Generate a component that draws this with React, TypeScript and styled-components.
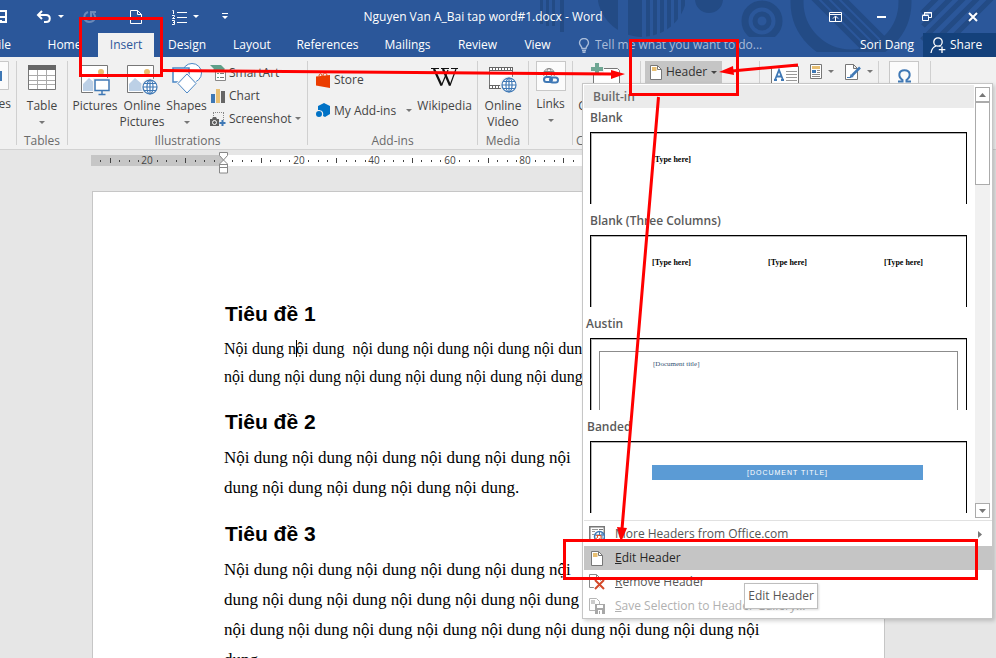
import React from "react";
import styled, { createGlobalStyle, css } from "styled-components";

const ui = `"Open Sans", "Noto Sans", sans-serif`;
const serif = `"Liberation Serif", "Times New Roman", serif`;

const GlobalStyle = createGlobalStyle`
  * { box-sizing: border-box; }
  body { margin: 0; overflow: hidden; }
  button { font: inherit; color: inherit; background: none; border: 0; padding: 0; cursor: default; }
  svg { display: block; flex: none; }
`;

const Window = styled.div`
  position: relative;
  display: flex;
  flex-direction: column;
  height: 100vh;
  overflow: hidden;
  background: #e6e6e6;
  color: #444;
  font: 12px/16px ${ui};
`;

/* ---------- title bar and tabs ---------- */

const Top = styled.header`
  position: relative;
  flex: none;
  background: #2b579a;
  color: #fff;
`;

const Decoration = styled.svg`
  position: absolute;
  top: 0;
  right: 0;
`;

const TitleBar = styled.div`
  position: relative;
  display: flex;
  align-items: center;
  height: 33px;
`;

const QuickAccess = styled.div`
  display: flex;
  align-items: center;
  height: 29px;
  width: 236px;
`;

const QuickButton = styled.button<{ $w: number; $dim?: boolean; $start?: boolean }>`
  display: flex;
  flex: none;
  align-items: center;
  justify-content: ${(p) => (p.$start ? "flex-start" : "center")};
  gap: 6px;
  width: ${(p) => p.$w}px;
  height: 24px;
  opacity: ${(p) => (p.$dim ? 0.3 : 1)};
`;

const Title = styled.h1`
  flex: 1;
  margin: 0;
  text-align: center;
  font: inherit;
`;

const WindowControls = styled.div`
  display: flex;
  justify-content: flex-end;
  width: 266px;
`;

const WindowButton = styled.button`
  display: flex;
  align-items: center;
  justify-content: center;
  width: 46px;
  height: 30px;
`;

const TabRow = styled.nav`
  position: relative;
  display: flex;
  height: 24px;
  line-height: 24px;
`;

const Tab = styled.button<{ $active?: boolean; $w: number }>`
  flex: none;
  width: ${(p) => p.$w}px;
  text-align: center;
  white-space: nowrap;
  ${(p) =>
    p.$active &&
    css`
      background: #f1f1f1;
      color: #2b579a;
    `}
`;

const FileTab = styled(Tab)`
  display: flex;
  justify-content: flex-end;
  margin-right: 20px;
`;

const TellMe = styled.label`
  display: flex;
  align-items: center;
  gap: 5px;
  flex: 1;
  margin-left: 14px;
  color: #a9bcd9;
`;

const TellMeInput = styled.input`
  width: 190px;
  padding: 0;
  border: 0;
  outline: 0;
  background: none;
  color: #fff;
  font: inherit;
  &::placeholder { color: #a9bcd9; opacity: 1; }
`;

const Account = styled.button`
  margin-right: 9px;
`;

const Share = styled.button`
  display: flex;
  align-items: center;
  gap: 4px;
  width: 73px;
  padding-left: 7px;
  background: #14417b;
`;

/* ---------- ribbon ---------- */

const Ribbon = styled.section`
  display: flex;
  flex: none;
  height: 93px;
  padding-top: 4px;
  background: #f1f1f1;
  border-bottom: 1px solid #d2d2d2;
`;

const Group = styled.div<{ $w: number }>`
  display: flex;
  flex: none;
  flex-direction: column;
  justify-content: space-between;
  width: ${(p) => p.$w}px;
  height: 84px;
  border-right: 1px solid #d0d0d0;
`;

const GroupBody = styled.div<{ $pad?: number }>`
  display: flex;
  align-items: flex-start;
  padding-left: ${(p) => p.$pad ?? 0}px;
`;

const GroupName = styled.div`
  height: 8px;
  color: #6a6a6a;
  line-height: 8px;
  text-align: center;
  white-space: nowrap;
`;

const BigButton = styled.button<{ $w: number }>`
  display: flex;
  flex-direction: column;
  align-items: center;
  width: ${(p) => p.$w}px;
  white-space: nowrap;
`;

const BigIcon = styled.span`
  display: flex;
  height: 37px;
  padding-top: 2px;
`;

const ArrowSlot = styled.span`
  display: flex;
  align-items: center;
  height: 16px;
`;

const IconBox = styled.span`
  display: flex;
  align-items: center;
  justify-content: center;
  width: 30px;
  height: 30px;
  margin-bottom: 5px;
  background: #fbfbfb;
  border: 1px solid #c8c8c8;
`;

const SmallColumn = styled.div<{ $row: number; $top?: number; $left?: number }>`
  display: grid;
  grid-auto-rows: ${(p) => p.$row}px;
  padding: ${(p) => p.$top ?? 0}px 0 0 ${(p) => p.$left ?? 0}px;
`;

const SmallButton = styled.button`
  display: flex;
  align-items: center;
  gap: 3px;
  white-space: nowrap;
`;

const HeaderButton = styled(SmallButton)`
  height: 22px;
  padding: 0 5px;
  gap: 4px;
  background: #c5c5c5;
  color: #333;
`;

const PagesButton = styled.button`
  display: flex;
  flex-direction: column;
  align-items: flex-start;
  gap: 6px;
  width: 11px;
  overflow: hidden;
  span { align-self: flex-end; }
`;

const AddinArrow = styled.span`
  display: flex;
  padding-left: 7px;
`;

const TextTools = styled.div`
  display: flex;
  gap: 11px;
  padding-left: 11px;
  align-items: flex-start;
  > :first-child { padding-top: 5px; }
`;

const ToolWithArrow = styled(SmallButton)`
  gap: 6px;
  height: 21px;
`;

const IconSlot = styled.span`
  display: flex;
  justify-content: center;
  width: 16px;
`;

/* ---------- document ---------- */

const Workspace = styled.main`
  display: flex;
  flex: 1;
  flex-direction: column;
  min-height: 0;
`;

const Page = styled.article`
  flex: 1;
  width: 793px;
  min-height: 0;
  margin: 17px 0 0 92px;
  padding: 107px 112px 0 131px;
  overflow: hidden;
  background: #fff;
  border: 1px solid #c6c6c6;
  border-bottom: 0;
  color: #000;
`;

const Heading = styled.h2`
  margin: 0 0 6px;
  padding-left: 1px;
  font: bold 21px/30px "Liberation Sans", Arial, sans-serif;
`;

const Paragraph = styled.p<{ $large?: boolean }>`
  margin: 0 0 16px;
  font-family: ${serif};
  font-size: ${(p) => (p.$large ? 17 : 16)}px;
  line-height: ${(p) => (p.$large ? 30 : 28)}px;
  white-space: pre;
`;

const Caret = styled.span`
  display: inline-block;
  height: 17px;
  margin-right: -1px;
  border-left: 1px solid #000;
  vertical-align: -3px;
`;

/* ---------- header gallery ---------- */

const Menu = styled.div`
  position: absolute;
  top: 83px;
  right: 3px;
  width: 411px;
  padding-left: 1px;
  background: #fff;
  border: 1px solid #c6c6c6;
  box-shadow: 2px 2px 4px rgba(0, 0, 0, 0.18);
`;

const Gallery = styled.div`
  display: flex;
  gap: 1px;
  border-bottom: 1px solid #e1e1e1;
`;

const GalleryList = styled.div`
  flex: 1;
`;

const Category = styled.div`
  margin-top: 1px;
  padding-left: 9px;
  background: #ebebeb;
  color: #6a6a6a;
  font-weight: 600;
  line-height: 23px;
`;

const Entry = styled.button<{ $indent: number }>`
  display: block;
  width: 100%;
  padding: 0 7px 7px ${(p) => p.$indent}px;
  text-align: left;
`;

const EntryName = styled.div`
  height: 24px;
  color: #5a5a5a;
  font-weight: 600;
  line-height: 20px;
`;

const Preview = styled.div<{ $indent: number }>`
  height: 72px;
  margin-left: ${(p) => p.$indent}px;
  border: solid #000;
  border-width: 1px 1px 0;
  box-shadow: inset 1px 1px 0 #b4b4b4;
  color: #000;
  font: bold 8px/10px ${serif};
`;

const PreviewRow = styled.div`
  display: flex;
  justify-content: space-between;
  padding: 22px 43px 0 61px;
`;

const AustinFrame = styled.div`
  height: 59px;
  margin: 12px 8px 0;
  padding: 7px 0 0 53px;
  border: solid #8c8c8c;
  border-width: 1px 1px 0;
  color: #2f4f70;
  font-size: 7px;
  font-weight: normal;
`;

const Band = styled.div`
  margin: 23px 43px 0 61px;
  background: #5b9bd5;
  color: #fff;
  font: 7px/15px "Liberation Sans", Arial, sans-serif;
  letter-spacing: 1px;
  text-align: center;
`;

const ScrollBar = styled.div`
  display: flex;
  flex-direction: column;
  width: 15px;
  margin: 3px 2px 2px 0;
  background: #f1f1f1;
`;

const ScrollArrow = styled.button`
  display: flex;
  align-items: center;
  justify-content: center;
  height: 15px;
  background: #fff;
  border: 1px solid #ababab;
`;

const Thumb = styled.div`
  height: 83px;
  background: #fff;
  border: 1px solid #ababab;
`;

const Track = styled.div`
  flex: 1;
`;

const Commands = styled.div`
  padding-top: 1px;
`;

const Command = styled.button<{ $active?: boolean }>`
  display: flex;
  align-items: center;
  gap: 10px;
  width: 100%;
  height: 24px;
  padding: 0 10px 0 5px;
  background: ${(p) => (p.$active ? "#c5c5c5" : "none")};
  color: ${(p) => (p.$active ? "#262626" : "#555")};
  &:disabled { color: #b1b1b1; }
`;

const CommandText = styled.span`
  flex: 1;
  text-align: left;
`;

const Tooltip = styled.div`
  position: absolute;
  right: 174px;
  bottom: 9px;
  padding: 4px 3px;
  background: #fff;
  border: 1px solid #bebebe;
  box-shadow: 1px 1px 2px rgba(0, 0, 0, 0.15);
  color: #575757;
`;

const Annotations = styled.svg`
  position: absolute;
  inset: 0;
  width: 100%;
  height: 100%;
  pointer-events: none;
`;

/* ---------- icons ---------- */

const Down = ({ color = "#777" }: { color?: string }) => (
  <svg width="6" height="3" viewBox="0 0 6 3" fill={color}><path d="M0 0h6L3 3z" /></svg>
);

const SaveIcon = () => (
  <svg width="8" height="14" viewBox="0 0 8 14" fill="none" stroke="#fff" strokeWidth="2">
    <path d="M0 1h6v11H0M0 7h6M1 13V10" />
  </svg>
);

const UndoIcon = () => (
  <svg width="16" height="14" viewBox="0 0 16 14" fill="none" stroke="#fff" strokeWidth="2">
    <path d="M2 5h8c5 0 5 7 0 7H8M6 1 2 5l4 4" />
  </svg>
);

const RedoIcon = () => (
  <svg width="14" height="14" viewBox="0 0 14 14" fill="none" stroke="#fff" strokeWidth="2">
    <path d="M5 2C0 4 0 11 6 12c6 0 8-6 4-9M8 7V2h5" />
  </svg>
);

const NewIcon = () => (
  <svg width="12" height="14" viewBox="0 0 12 14" fill="none" stroke="#fff">
    <path d="M.5.5h7l4 4v9H.5zM7.500.5v4h4" />
  </svg>
);

const ListIcon = () => (
  <svg width="15" height="16" viewBox="0 0 15 16" fill="none" stroke="#fff">
    <path d="M5 3.500h10M5 8.500h10M5 13.500h10M.5 1.500h1V5M0 6.500h2.500v1L.5 9.500H3M0 11.500h2.500v4H0M1 13.500h1.500" />
  </svg>
);

const BulbIcon = () => (
  <svg width="12" height="15" viewBox="0 0 12 15" fill="none" stroke="#a9bcd9" strokeWidth="1.400">
    <path d="M4 10.500C4 8 1.500 7.500 1.500 5a4.400 4.400 0 0 1 9 0c0 2.500-2.500 3-2.500 5.500zM4 12.500h4M4.500 14.300h3" />
  </svg>
);

const PersonIcon = () => (
  <svg width="16" height="17" viewBox="0 0 16 17" fill="none" stroke="#fff" strokeWidth="1.300">
    <circle cx="8" cy="5" r="4.200" />
    <path d="M6 9c-3 1-4.500 3-5 7M9.500 9l1 .5M12 9.500v6.500M8.800 12.700h6.500" />
  </svg>
);

const TableIcon = () => (
  <svg width="28" height="27" viewBox="0 0 28 27">
    <path fill="#fff" stroke="#777" d="M.5 2.500h27v24H.5z" />
    <path fill="#666" d="M0 2h28v5H0z" />
    <path stroke="#aaa" fill="none" d="M1 12.500h26M1 17.500h26M1 21.500h26M9.500 7v19M18.500 7v19" />
  </svg>
);

const Photo = () => (
  <>
    <path fill="#fff" stroke="#777" d="M1.500 2.500h26v27h-26z" />
    <path fill="#bcd0e6" d="M3 28V21l6-6 7 6v7z" />
    <circle cx="21" cy="9" r="3" fill="#e8bf72" />
  </>
);

const Globe = ({ x, y, r = 7 }: { x: number; y: number; r?: number }) => (
  <g fill="none" stroke="#3f78b5" strokeWidth="1.200" transform={`translate(${x} ${y})`}>
    <circle r={r} fill="#fff" />
    <ellipse rx={r / 2.3} ry={r} />
    <path d={`M0 ${-r}V${r}M${-r} 0H${r}M${-r + 1} ${-r / 2}H${r - 1}M${-r + 1} ${r / 2}H${r - 1}`} />
  </g>
);

const PicturesIcon = () => (
  <svg width="30" height="33" viewBox="0 0 30 33">
    <Photo />
    <path fill="#f1f1f1" d="M13 15h17v18H13z" />
    <path fill="#fff" stroke="#3f78b5" strokeWidth="1.500" d="M15 17h14v10.500H15z" />
    <path stroke="#3f78b5" strokeWidth="1.500" d="M22 28v3.500M18.500 31.500h7" />
  </svg>
);

const OnlinePicturesIcon = () => (
  <svg width="32" height="33" viewBox="0 0 32 33">
    <Photo />
    <circle cx="24" cy="24" r="9" fill="#f1f1f1" />
    <Globe x={24} y={24} />
  </svg>
);

const ShapesIcon = () => (
  <svg width="30" height="32" viewBox="0 0 30 32" fill="#fff" stroke="#4a86c5">
    <circle cx="20" cy="10" r="9.500" />
    <path strokeWidth="1.500" d="M1 5h16v14H1z" />
    <path stroke="#f1f1f1" strokeWidth="3" d="m15 11 9 9.500-9 9.500-9-9.500z" />
    <path d="m15 11 9 9.500-9 9.500-9-9.500z" />
  </svg>
);

const SmartArtIcon = () => (
  <svg width="16" height="16" viewBox="0 0 16 16">
    <path fill="#5fa08a" d="M0 0h11l4 4-3 3H5L2 6l2-2z" />
    <path fill="#fff" stroke="#888" d="M5.500 5.500h10v10h-10z" />
    <path stroke="#5fa08a" d="M7 8.500h2M7 12.500h2" /><path stroke="#777" d="M10 8.500h4M10 12.500h4" />
  </svg>
);

const ChartIcon = () => (
  <svg width="16" height="15" viewBox="0 0 16 15">
    <path fill="#3f78b5" d="M1 6h4v9H1z" /><path fill="#e8bf72" d="M6 1h4v14H6z" /><path fill="#666" d="M11 3h4v12h-4z" />
  </svg>
);

const ScreenshotIcon = () => (
  <svg width="16" height="16" viewBox="0 0 16 16">
    <path fill="none" stroke="#888" strokeDasharray="1 1" d="M3 1.500h11M3.500 2v6M13.500 2v7" />
    <path fill="#606060" d="M0 8h2l1-2h3l1 2h2v7H0z" />
    <circle cx="4.500" cy="11.500" r="2" fill="#606060" stroke="#fff" />
    <path stroke="#3f78b5" strokeWidth="2" d="M12.500 9v6M9.500 12h6" />
  </svg>
);

const StoreIcon = () => (
  <svg width="15" height="16" viewBox="0 0 15 16">
    <path fill="#eb3c00" d="M0 4.500 14 3v13L0 13.500z" />
    <path fill="none" stroke="#eb3c00" d="M3 4c0-3 3-3 3 0M7 4c0-4 4-4 4 0" />
  </svg>
);

const AddinIcon = () => (
  <svg width="15" height="15" viewBox="0 0 15 15" fill="#0072c6">
    <path d="M8 0l6 3v8l-5 3-2-1c1-4-1-6-5-6V3z" /><circle cx="3" cy="11" r="3" />
  </svg>
);

const WikiIcon = () => (
  <svg width="27" height="25" viewBox="0 0 27 25" fill="none" stroke="#111">
    <path d="M0 5.500h8M10 5.500h8M20 5.500h7" />
    <path strokeWidth="2.200" d="m3 6 7.500 16.500M12 6l7 16.500" />
    <path strokeWidth="1.200" d="M10.500 22.500 17 7M19 22.500 25 6" />
  </svg>
);

const VideoIcon = () => (
  <svg width="28" height="30" viewBox="0 0 28 30">
    <path fill="#fff" stroke="#777" d="M.5 4.500h23v21H.5z" />
    <path stroke="#666" strokeWidth="4" d="M0 6h24M0 24h24" />
    <path stroke="#fff" strokeWidth="2" strokeDasharray="2 1" d="M1 6h22M1 24h22" />
    <circle cx="20" cy="22" r="9" fill="#f1f1f1" />
    <Globe x={20} y={22} />
  </svg>
);

const LinksIcon = () => (
  <svg width="18" height="18" viewBox="0 0 18 18" fill="none">
    <g stroke="#888"><circle cx="7" cy="7" r="5.500" /><ellipse cx="7" cy="7" rx="2.500" ry="5.500" /><path d="M1 7h12M2 4.500h10" /></g>
    <path fill="#fbfbfb" d="M1 9h16v8H1z" />
    <g stroke="#3f78b5" strokeWidth="2"><rect x="2" y="10" width="8" height="5" rx="2.500" /><rect x="8" y="10.500" width="8" height="5" rx="2.500" /></g>
  </svg>
);

const CommentIcon = () => (
  <svg width="30" height="28" viewBox="0 0 30 28">
    <path fill="#fff" stroke="#777" d="M2.500 5.500h24l2 2v14h-17l-5 5v-5h-4z" />
    <path stroke="#f1f1f1" strokeWidth="7" d="M6.500 0v13M0 6.500h13" />
    <path stroke="#6fa693" strokeWidth="4" d="M6 0v12M0 6h12" />
  </svg>
);

const HeaderIcon = () => (
  <svg width="12" height="15" viewBox="0 0 12 15">
    <path fill="#fff" stroke="#777" d="M.5.5h7l4 4v10H.5z" />
    <path fill="#e8bf72" d="M2 2h4.500v4H2z" /><path fill="none" stroke="#777" d="M7.500.5v4h4" />
  </svg>
);

const TextBoxIcon = () => (
  <svg width="28" height="26" viewBox="0 0 28 26">
    <path fill="#fff" stroke="#777" d="M.5.5h27v25H.5z" />
    <path fill="none" stroke="#3f78b5" strokeWidth="1.800" d="m4 14 4-10 4 10M5.500 10.500h5M3 14h3M10 14h3" />
    <path stroke="#999" d="M15 5.500h11M15 8.500h11M15 11.500h11M15 14.500h11M3 18.500h23M3 21.500h23" />
  </svg>
);

const QuickPartsIcon = () => (
  <svg width="12" height="15" viewBox="0 0 12 15">
    <path fill="#fff" stroke="#777" d="M.5.5h11v14H.5z" />
    <path fill="#e8bf72" d="M2 2h8v3H2z" /><path fill="#3f78b5" d="M2 6h4v3H2z" />
    <path stroke="#888" d="M7 6.500h3M7 8.500h3M2 10.500h8M2 12.500h8" />
  </svg>
);

const SignatureIcon = () => (
  <svg width="16" height="16" viewBox="0 0 16 16">
    <path fill="#fff" stroke="#777" d="M.5.5h8l4 4v11H.5zM8.500.5v4h4" />
    <path stroke="#3f78b5" strokeWidth="2.500" d="M15 3.500 7 11.500" /><path fill="#3f78b5" d="m4.500 14 1.200-4 3 3z" />
    <path stroke="#3f78b5" d="M2 13.500h4" />
  </svg>
);

const OmegaIcon = () => (
  <svg width="15" height="14" viewBox="0 0 15 14" fill="none" stroke="#3f78b5" strokeWidth="2">
    <path d="M1 12.500h4.500V11C1 8 1 1.200 7.500 1.200S14 8 9.500 11v1.500H14" />
  </svg>
);

const OfficeComIcon = () => (
  <svg width="16" height="16" viewBox="0 0 16 16">
    <path fill="#fff" stroke="#777" strokeWidth="1.500" d="M.8.8h14.500v14.500H.8z" />
    <path stroke="#999" d="M3 3.500h6M3 5.500h3M3 8.500h2" /><path stroke="#777" d="M10 3.500h4" />
    <circle cx="10.500" cy="10.500" r="5" fill="#fff" stroke="#3f78b5" strokeWidth="1.500" />
    <path fill="none" stroke="#3f78b5" d="M10.500 5.500v5M6 9h9M13 6.500v7" />
    <path fill="#fff" stroke="#e0552b" d="M3.500 15.500 9 11 7.500 9.500H12v4.500L10.500 12.500 7 15.500z" />
  </svg>
);

const RemoveIcon = () => (
  <svg width="16" height="16" viewBox="0 0 16 16">
    <path fill="#fff" stroke="#888" d="M.5.5h7l4 4v9H.5zM7.500.5v4h4" />
    <path stroke="#999" d="M2 3.500h3M2 5.500h3" />
    <path stroke="#fff" strokeWidth="4" d="m6 6 9 9M15 6l-9 9" />
    <path stroke="#d4492a" strokeWidth="2" d="m6 6 9 9M15 6l-9 9" />
  </svg>
);

const SaveSelectionIcon = () => (
  <svg width="16" height="16" viewBox="0 0 16 16">
    <path fill="#fff" stroke="#b5b5b5" d="M.5.5h7l3 3v9H.5z" />
    <path fill="#ccc" d="M2 2h4v4H2z" />
    <path fill="#a8a8a8" d="M6 6h10v10H6z" /><path fill="#fff" d="M8 7h6v3H8zM9 12h4v4H9z" /><path fill="#a8a8a8" d="M10 13h1v3h-1z" />
  </svg>
);

/* ---------- drawings ---------- */

const bars = [[598, 20], [628, 14], [646, 4], [653, 4], [660, 4], [667, 4], [674, 4], [681, 4]];

const HeaderArt = () => (
  <Decoration width="466" height="57" viewBox="530 0 466 57" fill="#234b85">
    <clipPath id="disc"><circle cx="642" cy="-8" r="45" /></clipPath>
    <clipPath id="bowl"><circle cx="851" cy="2" r="48" /></clipPath>
    <clipPath id="band"><path d="M780 0h216v52H780z" /></clipPath>
    <clipPath id="upper"><path d="M730 0h60v37h-60z" /></clipPath>
    <path d="M540 0h3v24h-3zM546 0h3v26h-3zM552 0h3v26h-3zM560 0h4v32h-4z" />
    <g clipPath="url(#disc)">{bars.map(([x, w]) => <rect key={x} x={x} y="0" width={w} height="40" />)}</g>
    <circle cx="709" cy="-1" r="14" />
    <g clipPath="url(#upper)" fill="none" stroke="#234b85">
      <circle cx="762" cy="21" r="17" strokeWidth="7" /><circle cx="762" cy="21" r="7" strokeWidth="5" />
    </g>
    <g clipPath="url(#band)">
      <circle cx="851" cy="2" r="54" fill="none" stroke="#234b85" strokeWidth="13" />
      <g clipPath="url(#bowl)" stroke="#234b85" strokeWidth="5">
        <path d="M795-20 880 65M805-20 890 65M815-20 900 65M825-20 910 65" />
      </g>
      <g stroke="#234b85" strokeWidth="5">
        <path d="M922 13 940-5M923 26 953-4M922 40 967-5M936 40 981-5M950 40 995-5" />
      </g>
    </g>
  </Decoration>
);

const ORIGIN = 223;
const ticks = Array.from({ length: 110 }, (_, i) => i - 13).filter((i) => i !== 0);

const Ruler = () => (
  <svg width="100%" height="24" fontFamily="Open Sans, sans-serif" fontSize="10" fill="#444">
    <rect x="91" y="5" width="132" height="11" fill="#c6c6c6" />
    <rect x={ORIGIN} y="5" width="662" height="11" fill="#fff" />
    {ticks.map((i) => {
      const x = Math.round(ORIGIN + i * 9.45);
      if (x > 884) return null;
      if (i % 8 === 0) return <text key={i} x={x} y="14" textAnchor="middle">{Math.abs(i / 8) * 20}</text>;
      return i % 4 === 0 ? <rect key={i} x={x} y="8" width="1" height="5" /> : <rect key={i} x={x} y="10" width="1" height="2" />;
    })}
    <path fill="#fff" stroke="#888" d="M219.500 2.500h8v3l-4 4.500 4 4v9h-8v-9l4-4-4-4.500zM219.500 14.500h8M219.500 17.500h8" />
  </svg>
);

const Marks = () => (
  <Annotations fill="none" stroke="#f00" strokeWidth="3" aria-hidden="true">
    <rect x="80.500" y="18.500" width="81" height="57" />
    <rect x="630.500" y="40.500" width="107" height="54" />
    <rect x="564.500" y="540.500" width="412" height="38" />
    <path d="M163 70.500 612 74M798 65 732 71M658.500 97 622 529" />
    <path fill="#f00" stroke="none" d="m625 74-14 5v-9zM719 72l14-6 1 9zM621 542l-4-15 10 1z" />
  </Annotations>
);

/* ---------- data ---------- */

const tabs: [string, number][] = [
  ["Home", 67], ["Insert", 56], ["Design", 66], ["Layout", 64], ["References", 87], ["Mailings", 73], ["Review", 67], ["View", 53],
];

const n = "nội dung ";

export default function App() {
  return (
    <Window>
      <GlobalStyle />
      <Top>
        <HeaderArt />
        <TitleBar>
          <QuickAccess>
            <QuickButton $w={30} $start aria-label="Save"><SaveIcon /></QuickButton>
            <QuickButton $w={40} aria-label="Undo"><UndoIcon /><Down color="#fff" /></QuickButton>
            <QuickButton $w={40} $dim aria-label="Redo"><RedoIcon /></QuickButton>
            <QuickButton $w={52} aria-label="New"><NewIcon /></QuickButton>
            <QuickButton $w={47} aria-label="Numbering"><ListIcon /><Down color="#fff" /></QuickButton>
            <QuickButton $w={31} aria-label="Customize">
              <svg width="6" height="7" viewBox="0 0 6 7" fill="#fff"><path d="M0 0h6v1H0zM0 3h6L3 6z" /></svg>
            </QuickButton>
          </QuickAccess>
          <Title>Nguyen Van A_Bai tap word#1.docx - Word</Title>
          <WindowControls>
            <WindowButton aria-label="Ribbon display options">
              <svg width="13" height="10" viewBox="0 0 13 10" fill="none" stroke="#fff"><path d="M.5.5h12v9H.5zM0 2.500h13M6.500 9V4.500M4 6.500 6.500 4 9 6.500" /></svg>
            </WindowButton>
            <WindowButton aria-label="Minimize">
              <svg width="9" height="2" fill="#fff"><path d="M0 0h9v2H0z" /></svg>
            </WindowButton>
            <WindowButton aria-label="Restore">
              <svg width="10" height="9" viewBox="0 0 10 9" fill="none" stroke="#fff"><path d="M.5 3.500h6v5h-6zM.5 3h6M2.500 3V.5h7v5H7M2 1h8" /></svg>
            </WindowButton>
            <WindowButton aria-label="Close">
              <svg width="10" height="10" viewBox="0 0 10 10" stroke="#fff" strokeWidth="2"><path d="m1 1 8 8M9 1 1 9" /></svg>
            </WindowButton>
          </WindowControls>
        </TitleBar>
        <TabRow>
          <FileTab $w={11}>File</FileTab>
          {tabs.map(([name, w]) => <Tab key={name} $w={w} $active={name === "Insert"}>{name}</Tab>)}
          <TellMe>
            <BulbIcon />
            <TellMeInput aria-label="Tell me" placeholder="Tell me what you want to do..." />
          </TellMe>
          <Account>Sori Dang</Account>
          <Share><PersonIcon />Share</Share>
        </TabRow>
      </Top>

      <Ribbon>
        <Group $w={17}>
          <PagesButton>
            <svg width="9" height="29" viewBox="0 0 9 29"><path fill="#fbfbfb" stroke="#c8c8c8" d="M-1 .5h9.500v28H-1z" /><path fill="#3f78b5" d="M0 10h2v10H0z" /></svg>
            <span>Pages</span>
          </PagesButton>
        </Group>
        <Group $w={51}>
          <GroupBody>
            <BigButton $w={50}><BigIcon><TableIcon /></BigIcon>Table<ArrowSlot><Down /></ArrowSlot></BigButton>
          </GroupBody>
          <GroupName>Tables</GroupName>
        </Group>
        <Group $w={240}>
          <GroupBody $pad={3}>
            <BigButton $w={48}><BigIcon><PicturesIcon /></BigIcon>Pictures</BigButton>
            <BigButton $w={46}><BigIcon><OnlinePicturesIcon /></BigIcon>Online<span>Pictures</span></BigButton>
            <BigButton $w={43}><BigIcon><ShapesIcon /></BigIcon>Shapes<ArrowSlot><Down /></ArrowSlot></BigButton>
            <SmallColumn $row={23} $left={2}>
              <SmallButton><SmartArtIcon />SmartArt</SmallButton>
              <SmallButton><ChartIcon />Chart</SmallButton>
              <SmallButton><ScreenshotIcon />Screenshot<Down /></SmallButton>
            </SmallColumn>
          </GroupBody>
          <GroupName>Illustrations</GroupName>
        </Group>
        <Group $w={170}>
          <GroupBody $pad={8}>
            <SmallColumn $row={31} $top={3}>
              <SmallButton><StoreIcon />Store</SmallButton>
              <SmallButton><AddinIcon />My Add-ins<AddinArrow><Down /></AddinArrow></SmallButton>
            </SmallColumn>
            <BigButton $w={66}><BigIcon><WikiIcon /></BigIcon>Wikipedia</BigButton>
          </GroupBody>
          <GroupName>Add-ins</GroupName>
        </Group>
        <Group $w={51}>
          <GroupBody>
            <BigButton $w={50}><BigIcon><VideoIcon /></BigIcon>Online<span>Video</span></BigButton>
          </GroupBody>
          <GroupName>Media</GroupName>
        </Group>
        <Group $w={44}>
          <GroupBody>
            <BigButton $w={43}><IconBox><LinksIcon /></IconBox>Links<ArrowSlot><Down /></ArrowSlot></BigButton>
          </GroupBody>
        </Group>
        <Group $w={68}>
          <GroupBody>
            <BigButton $w={66}><BigIcon><CommentIcon /></BigIcon>Comment</BigButton>
          </GroupBody>
          <GroupName>Comments</GroupName>
        </Group>
        <Group $w={119}>
          <GroupBody $pad={4}>
            <HeaderButton aria-expanded="true"><HeaderIcon />Header<Down color="#444" /></HeaderButton>
          </GroupBody>
        </Group>
        <Group $w={119}>
          <TextTools>
            <SmallButton aria-label="Text box"><TextBoxIcon /></SmallButton>
            <ToolWithArrow aria-label="Quick parts"><QuickPartsIcon /><Down /></ToolWithArrow>
            <ToolWithArrow aria-label="Signature line"><SignatureIcon /><Down /></ToolWithArrow>
          </TextTools>
        </Group>
        <Group $w={52}>
          <GroupBody>
            <BigButton $w={50} aria-label="Symbols"><IconBox><OmegaIcon /></IconBox></BigButton>
          </GroupBody>
        </Group>
      </Ribbon>

      <Workspace>
        <Ruler />
        <Page>
          <Heading>Tiêu đề 1</Heading>
          <Paragraph>
            Nội dung n<Caret />ội dung  {n.repeat(6)}
            {"\n"}
            {n.repeat(6)}
          </Paragraph>
          <Heading>Tiêu đề 2</Heading>
          <Paragraph $large>
            Nội dung {n.repeat(4)}nội{"\n"}dung {n.repeat(3)}nội dung.
          </Paragraph>
          <Heading>Tiêu đề 3</Heading>
          <Paragraph $large>
            Nội dung {n.repeat(4)}nội{"\n"}dung {n.repeat(7)}{"\n"}{n.repeat(8)}nội{"\n"}dung.
          </Paragraph>
        </Page>
      </Workspace>

      <Menu>
        <Gallery>
          <GalleryList>
            <Category>Built-in</Category>
            <Entry $indent={6}>
              <EntryName>Blank</EntryName>
              <Preview $indent={0}><PreviewRow><span>[Type here]</span></PreviewRow></Preview>
            </Entry>
            <Entry $indent={6}>
              <EntryName>Blank (Three Columns)</EntryName>
              <Preview $indent={0}><PreviewRow><span>[Type here]</span><span>[Type here]</span><span>[Type here]</span></PreviewRow></Preview>
            </Entry>
            <Entry $indent={2}>
              <EntryName>Austin</EntryName>
              <Preview $indent={4}><AustinFrame>[Document title]</AustinFrame></Preview>
            </Entry>
            <Entry $indent={3}>
              <EntryName>Banded</EntryName>
              <Preview $indent={3}><Band>[DOCUMENT TITLE]</Band></Preview>
            </Entry>
          </GalleryList>
          <ScrollBar>
            <ScrollArrow aria-label="Scroll up"><svg width="7" height="4" fill="#777"><path d="M0 4h7L3.500 0z" /></svg></ScrollArrow>
            <Thumb />
            <Track />
            <ScrollArrow aria-label="Scroll down"><svg width="7" height="4" fill="#777"><path d="M0 0h7L3.500 4z" /></svg></ScrollArrow>
          </ScrollBar>
        </Gallery>
        <Commands>
          <Command>
            <OfficeComIcon /><CommandText><u>M</u>ore Headers from Office.com</CommandText>
            <svg width="4" height="7" fill="#777"><path d="M0 0v7l4-3.500z" /></svg>
          </Command>
          <Command $active><IconSlot><HeaderIcon /></IconSlot><CommandText><u>E</u>dit Header</CommandText></Command>
          <Command><RemoveIcon /><CommandText><u>R</u>emove Header</CommandText></Command>
          <Command disabled><SaveSelectionIcon /><CommandText><u>S</u>ave Selection to Header Gallery...</CommandText></Command>
        </Commands>
        <Tooltip role="tooltip">Edit Header</Tooltip>
      </Menu>
      <Marks />
    </Window>
  );
}
